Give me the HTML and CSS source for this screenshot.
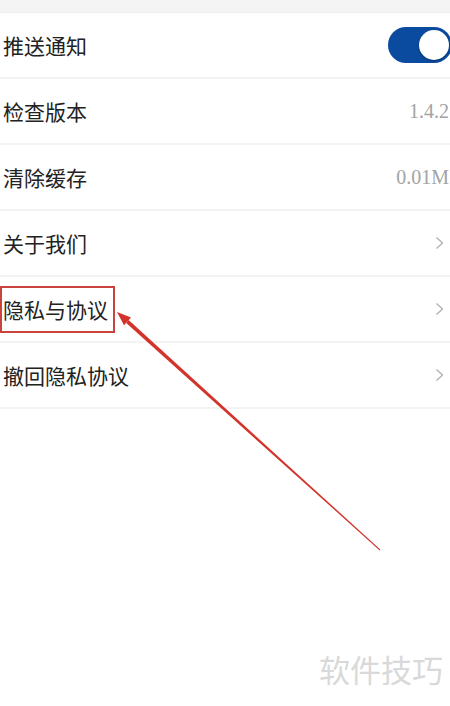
FILE: index.html
```html
<!DOCTYPE html>
<html lang="zh">
<head>
<meta charset="utf-8">
<link rel="stylesheet" href="styles.css">
</head>
<body>
<div class="page">
  <div class="topband"></div>
  <ul class="list">
    <li class="row"><span class="label">推送通知</span><span class="toggle"><span class="knob"></span></span></li>
    <li class="row"><span class="label">检查版本</span><span class="value">1.4.2</span></li>
    <li class="row"><span class="label">清除缓存</span><span class="value">0.01M</span></li>
    <li class="row"><span class="label">关于我们</span><svg class="chev" viewBox="0 0 9 14"><path d="M1.5 1.5 L7.5 7 L1.5 12.5"/></svg></li>
    <li class="row"><span class="label highlight">隐私与协议</span><svg class="chev" viewBox="0 0 9 14"><path d="M1.5 1.5 L7.5 7 L1.5 12.5"/></svg></li>
    <li class="row"><span class="label">撤回隐私协议</span><svg class="chev" viewBox="0 0 9 14"><path d="M1.5 1.5 L7.5 7 L1.5 12.5"/></svg></li>
  </ul>
  <svg class="arrow" width="450" height="706" viewBox="0 0 450 706">
    <polygon points="380.3,549.6 379.7,550.4 126.2,323.1 128.6,320.1" fill="#d2332b"/>
    <polygon points="117,312 131,317.5 124,325.3" fill="#d2332b"/>
  </svg>
  <div class="watermark">软件技巧</div>
</div>
</body>
</html>
```
FILE: styles.css
```css
html, body {
  margin: 0;
  padding: 0;
  background: #ffffff;
}
.page {
  position: relative;
  width: 450px;
  height: 706px;
  overflow: hidden;
  font-family: "Noto Sans CJK SC", sans-serif;
}
.topband {
  height: 12px;
  background: #f4f4f4;
  border-bottom: 1px solid #ededed;
}
.list {
  list-style: none;
  margin: 0;
  padding: 0;
}
.row {
  display: flex;
  align-items: center;
  justify-content: space-between;
  height: 64px;
  padding: 0 2px 0 3px;
  border-bottom: 2px solid #f3f3f3;
}
.label {
  font-size: 21px;
  color: #222222;
  line-height: 1;
}
.highlight {
  margin-left: -3px;
  padding: 11px 5px 11px 1px;
  border: 2px solid #c9443c;
}
.value {
  font-family: "Liberation Serif", serif;
  font-size: 20px;
  color: #a3a3a3;
  margin-right: -1px;
}
.toggle {
  position: relative;
  display: block;
  width: 64px;
  height: 36px;
  border-radius: 18px;
  background: #0b4b9f;
  margin-right: -4px;
}
.knob {
  position: absolute;
  right: 3px;
  top: 3px;
  width: 30px;
  height: 30px;
  border-radius: 50%;
  background: #ffffff;
  box-shadow: 0 1px 2px rgba(0,0,0,0.35);
}
.chev {
  width: 9px;
  height: 14px;
  margin-right: 4px;
}
.chev path {
  fill: none;
  stroke: #b0b0b0;
  stroke-width: 1.3;
}
.arrow {
  position: absolute;
  left: 0;
  top: 0;
}
.watermark {
  position: absolute;
  right: 7px;
  bottom: 15px;
  font-size: 31px;
  color: #d9d9d9;
}
```
